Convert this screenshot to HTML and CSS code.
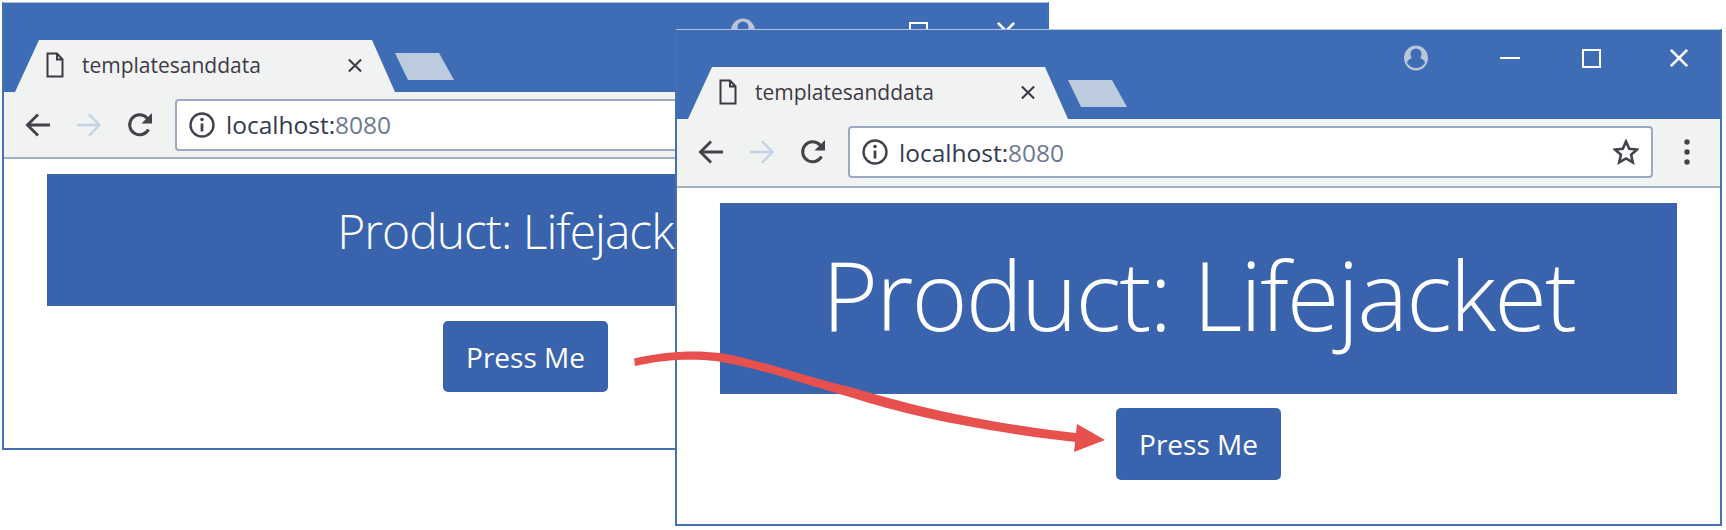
FILE: index.html
```html
<!DOCTYPE html>
<html lang="en">
<head>
    <meta charset="UTF-8">
    <title>templatesanddata</title>
    <link rel="stylesheet" href="styles.css">
</head>
<body>
    <svg class="icon-defs" aria-hidden="true">
        <symbol id="i-doc" viewBox="0 0 18 26"><path d="M1.500 1.500h9.500l5.500 6v17h-15zM11 1.500v6h5.500" fill="none" stroke="currentColor" stroke-width="2"/></symbol>
        <symbol id="i-x" viewBox="0 0 16 16"><path d="M1.500 1.500l13 13M14.500 1.500l-13 13" fill="none" stroke="currentColor" stroke-width="2.200"/></symbol>
        <symbol id="i-back" viewBox="0 0 27 26"><path d="M26 13H3M13.500 2L2.500 13l11 11" fill="none" stroke="currentColor" stroke-width="3"/></symbol>
        <symbol id="i-forward" viewBox="0 0 27 26"><path d="M1 13h23M13.500 2l11 11-11 11" fill="none" stroke="currentColor" stroke-width="2.400"/></symbol>
        <symbol id="i-reload" viewBox="0 0 26 26"><path d="M21.500 17.500A10 10 0 1 1 20 6l3 3" fill="none" stroke="currentColor" stroke-width="3"/><path d="M25 1v10.500H14.500z" fill="currentColor"/></symbol>
        <symbol id="i-info" viewBox="0 0 26 26"><circle cx="13" cy="13" r="11.500" fill="none" stroke="currentColor" stroke-width="2.400"/><path d="M13 11.500v8" stroke="currentColor" stroke-width="2.800"/><circle cx="13" cy="7.500" r="1.800" fill="currentColor"/></symbol>
        <symbol id="i-star" viewBox="0 0 26 26"><path d="M13 2.500l3.200 7.200 7.800.8-5.900 5.200 1.700 7.700-6.800-4-6.800 4 1.700-7.700L2 10.500l7.800-.8z" fill="none" stroke="currentColor" stroke-width="2.600"/></symbol>
        <symbol id="i-dots" viewBox="0 0 6 26"><circle cx="3" cy="3" r="2.700" fill="currentColor"/><circle cx="3" cy="13" r="2.700" fill="currentColor"/><circle cx="3" cy="23" r="2.700" fill="currentColor"/></symbol>
        <symbol id="i-profile" viewBox="0 0 24 26"><path fill-rule="evenodd" d="M12 .5C18.500.5 24 6 24 13s-5.500 12.500-12 12.500S0 20 0 13 5.500.5 12 .5zM12 3.500a5.500 5.500 0 0 0-5.500 5.500c0 1.500.5 3 1.500 4-2.500 1-4.500 2.500-5 4.500 2 4 5.500 5.500 9 5.500s7-1.500 9-5.500c-.5-2-2.500-3.500-5-4.500 1-1 1.500-2.500 1.500-4A5.500 5.500 0 0 0 12 3.500z" fill="currentColor"/></symbol>
    </svg>

    <div class="stage">
        <!-- Janela de tras -->
        <div class="window window-back">
            <div class="titlebar">
                <div class="tab">
                    <svg class="tab-doc"><use href="#i-doc"/></svg>
                    <span class="tab-title">templatesanddata</span>
                    <svg class="tab-close"><use href="#i-x"/></svg>
                </div>
                <div class="new-tab"></div>
                <div class="controls">
                    <svg class="profile"><use href="#i-profile"/></svg>
                    <span class="minimize"></span>
                    <span class="maximize"></span>
                    <svg class="close"><use href="#i-x"/></svg>
                </div>
            </div>
            <div class="toolbar">
                <svg class="nav"><use href="#i-back"/></svg>
                <svg class="nav nav-off"><use href="#i-forward"/></svg>
                <svg class="nav"><use href="#i-reload"/></svg>
                <div class="address">
                    <svg class="nav"><use href="#i-info"/></svg>
                    <span class="url">localhost:<span class="port">8080</span></span>
                    <svg class="nav star"><use href="#i-star"/></svg>
                </div>
                <svg class="dots"><use href="#i-dots"/></svg>
            </div>
            <div class="content">
                <div class="banner">Product: Lifejacket</div>
                <button type="button" class="press">Press Me</button>
            </div>
        </div>

        <!-- Janela da frente -->
        <div class="window window-front">
            <div class="titlebar">
                <div class="tab">
                    <svg class="tab-doc"><use href="#i-doc"/></svg>
                    <span class="tab-title">templatesanddata</span>
                    <svg class="tab-close"><use href="#i-x"/></svg>
                </div>
                <div class="new-tab"></div>
                <div class="controls">
                    <svg class="profile"><use href="#i-profile"/></svg>
                    <span class="minimize"></span>
                    <span class="maximize"></span>
                    <svg class="close"><use href="#i-x"/></svg>
                </div>
            </div>
            <div class="toolbar">
                <svg class="nav"><use href="#i-back"/></svg>
                <svg class="nav nav-off"><use href="#i-forward"/></svg>
                <svg class="nav"><use href="#i-reload"/></svg>
                <div class="address">
                    <svg class="nav"><use href="#i-info"/></svg>
                    <span class="url">localhost:<span class="port">8080</span></span>
                    <svg class="nav star"><use href="#i-star"/></svg>
                </div>
                <svg class="dots"><use href="#i-dots"/></svg>
            </div>
            <div class="content">
                <div class="banner">Product: Lifejacket</div>
                <button type="button" class="press">Press Me</button>
            </div>
        </div>

        <!-- Seta entre os botoes -->
        <svg class="arrow" viewBox="0 0 1726 530">
            <path d="M634 358.500C665 351 695 350 720 353C762 360 805 377 852 387.500C895 400 960 420 1080 433.500V442.500C960 429 890 410 848 396.500C800 383 760 368 716 361C692 358.500 665 359 635 366z" fill="#e8504e"/>
            <path d="M1105 440L1077 424L1074 452z" fill="#e8504e"/>
        </svg>
    </div>
</body>
</html>
```

FILE: styles.css
```css
body {
    margin: 0;
    background-color: #fff;
    font-family: "Open Sans", "Noto Sans", sans-serif;
    overflow: hidden;
}

.icon-defs {
    position: absolute;
    width: 0;
    height: 0;
}

.stage {
    position: relative;
    width: 1726px;
    height: 530px;
}

/* Janelas */
.window {
    position: absolute;
    box-sizing: border-box;
    display: flex;
    flex-direction: column;
    width: 1047px;
    background-color: #fff;
    border: 2px solid #4470b5;
    border-top: 1px solid #b4c4dc;
}

.window-back {
    left: 2px;
    top: 2px;
    height: 448px;
}

.window-front {
    left: 675px;
    top: 29px;
    height: 497px;
}

.titlebar {
    display: flex;
    align-items: flex-end;
    height: 89px;
    padding-left: 11px;
    background-color: #3f6db5;
    flex-shrink: 0;
}

.tab {
    box-sizing: border-box;
    display: flex;
    align-items: center;
    width: 380px;
    height: 52px;
    padding: 0 32px 2px 31px;
    background-color: #f1f2f2;
    color: #3e3a45;
    clip-path: polygon(0 100%, 24px 0, 357px 0, 100% 100%);
}

.tab-doc {
    width: 18px;
    height: 26px;
    flex-shrink: 0;
}

.tab-title {
    flex: 1;
    margin-left: 18px;
    font-size: 21px;
    white-space: nowrap;
}

.tab-close {
    width: 16px;
    height: 15px;
}

.new-tab {
    width: 59px;
    height: 27px;
    margin-bottom: 12px;
    background-color: #bccbde;
    clip-path: polygon(0 0, 44px 0, 100% 100%, 13px 100%);
}

.controls {
    flex: 1;
    display: flex;
    align-items: center;
    align-self: flex-start;
    height: 56px;
    color: #fff;
}

.profile {
    width: 24px;
    height: 26px;
    margin-left: 277px;
    color: #b9c5d8;
}

.minimize {
    width: 20px;
    height: 2px;
    margin-left: 72px;
    background-color: #fff;
}

.maximize {
    box-sizing: border-box;
    width: 19px;
    height: 19px;
    margin-left: 62px;
    border: 2px solid #fff;
}

.close {
    width: 20px;
    height: 20px;
    margin-left: 68px;
}

/* Barra de endereco */
.toolbar {
    box-sizing: border-box;
    display: flex;
    align-items: center;
    gap: 25px;
    height: 69px;
    padding: 0 0 1px 21px;
    background-color: #f1f2f2;
    border-bottom: 2px solid #a3afc2;
    color: #45424b;
    flex-shrink: 0;
}

.window-back .toolbar {
    height: 67px;
    padding-bottom: 0;
}

.nav {
    width: 26px;
    height: 26px;
    flex-shrink: 0;
}

.nav-off {
    color: #c3d3e6;
}

.address {
    box-sizing: border-box;
    display: flex;
    align-items: center;
    flex: 1;
    height: 52px;
    margin-left: -3px;
    padding: 0 12px;
    background-color: #fff;
    border: 2px solid #9aaac4;
    border-radius: 4px;
}

.url {
    flex: 1;
    margin-left: 11px;
    font-size: 24.500px;
    color: #33394f;
}

.port {
    color: #6d7a92;
}

.dots {
    width: 6px;
    height: 26px;
    margin: 0 30px 0 6px;
}

/* Conteudo */
.content {
    flex: 1;
    display: flex;
    flex-direction: column;
    align-items: center;
    padding: 15px 43px 0;
}

.banner {
    align-self: stretch;
    height: 132px;
    background-color: #3964ad;
    color: #fff;
    font-size: 48px;
    font-weight: 300;
    letter-spacing: -1px;
    line-height: 114px;
    text-align: center;
}

.press {
    box-sizing: border-box;
    width: 165px;
    height: 71px;
    margin-top: 15px;
    padding: 0;
    background-color: #3964ad;
    color: #fff;
    border: none;
    border-radius: 5px;
    font-family: inherit;
    font-size: 28px;
}

.window-front .banner {
    height: 191px;
    font-size: 96px;
    letter-spacing: -2px;
    line-height: 182px;
}

.window-front .press {
    margin-top: 14px;
    height: 72px;
}

.arrow {
    position: absolute;
    left: 0;
    top: 0;
    width: 1726px;
    height: 530px;
    pointer-events: none;
}
```
